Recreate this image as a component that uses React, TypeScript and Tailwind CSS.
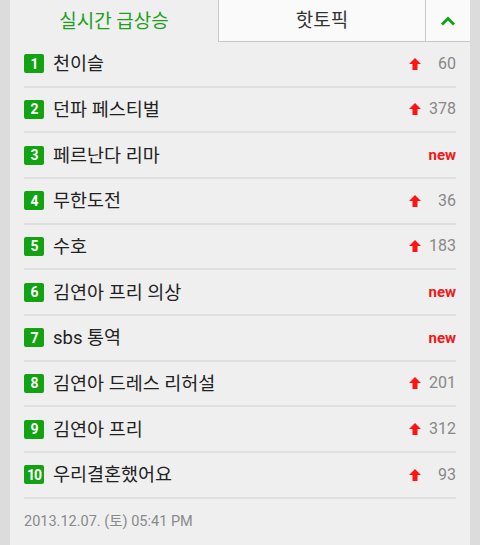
import { useState } from "react";

const items = [
  { rank: 1, title: "천이슬", delta: "60" },
  { rank: 2, title: "던파 페스티벌", delta: "378" },
  { rank: 3, title: "페르난다 리마", delta: null },
  { rank: 4, title: "무한도전", delta: "36" },
  { rank: 5, title: "수호", delta: "183" },
  { rank: 6, title: "김연아 프리 의상", delta: null },
  { rank: 7, title: "sbs 통역", delta: null },
  { rank: 8, title: "김연아 드레스 리허설", delta: "201" },
  { rank: 9, title: "김연아 프리", delta: "312" },
  { rank: 10, title: "우리결혼했어요", delta: "93" },
];

export default function App() {
  const [tab, setTab] = useState(0);
  return (
    <div
      className="w-[480px] h-[545px] overflow-hidden bg-[#dcdcdc] px-[10px]"
      style={{ fontFamily: "Roboto, 'Noto Sans CJK KR', sans-serif" }}
    >
      <div className="h-full bg-[#efefef]">
        {/* Tabs */}
        <div className="flex h-[42px]">
          <button
            onClick={() => setTab(0)}
            className="w-[208px] flex items-center justify-center pt-[2px] text-[19px] text-[#1ea01e]"
          >
            실시간 급상승
          </button>
          <button
            onClick={() => setTab(1)}
            className="flex-1 flex items-center justify-center pt-[2px] bg-[#fafafa] border-l border-b border-[#c8c8c8] text-[19px] text-[#333]"
          >
            핫토픽
          </button>
          <button className="w-[45px] flex items-center justify-center bg-[#fafafa] border-l border-b border-[#c8c8c8]">
            <svg width="16" height="10" viewBox="0 0 16 10">
              <path d="M2 8.5 L8 2.5 L14 8.5" fill="none" stroke="#12a012" strokeWidth="3" />
            </svg>
          </button>
        </div>

        {/* List */}
        <div className="px-[14px]">
          {items.map((it) => (
            <div
              key={it.rank}
              className="h-[45.67px] flex items-center border-b-2 border-[#dfdfdf]"
            >
              <span className="w-[20px] h-[19px] rounded-[2px] bg-[#12a212] text-white text-[14px] font-bold flex items-center justify-center tracking-[-1px] leading-none">
                {it.rank}
              </span>
              <span className="ml-[9px] pt-[3px] text-[18.5px] text-[#222]">{it.title}</span>
              <div className="ml-auto flex items-center">
                {it.delta ? (
                  <>
                    <svg width="12" height="12" viewBox="0 0 12 12">
                      <path d="M6 0 L12 6 L8.5 6 L8.5 12 L3.5 12 L3.5 6 L0 6 Z" fill="#ff1414" />
                    </svg>
                    <span className="w-[35px] text-right text-[16px] text-[#888]">{it.delta}</span>
                  </>
                ) : (
                  <span className="text-[15px] font-bold text-[#f01818]">new</span>
                )}
              </div>
            </div>
          ))}
          <div className="pt-[12px] text-[14.5px] text-[#8a8a8a]">2013.12.07. (토) 05:41 PM</div>
        </div>
      </div>
    </div>
  );
}
